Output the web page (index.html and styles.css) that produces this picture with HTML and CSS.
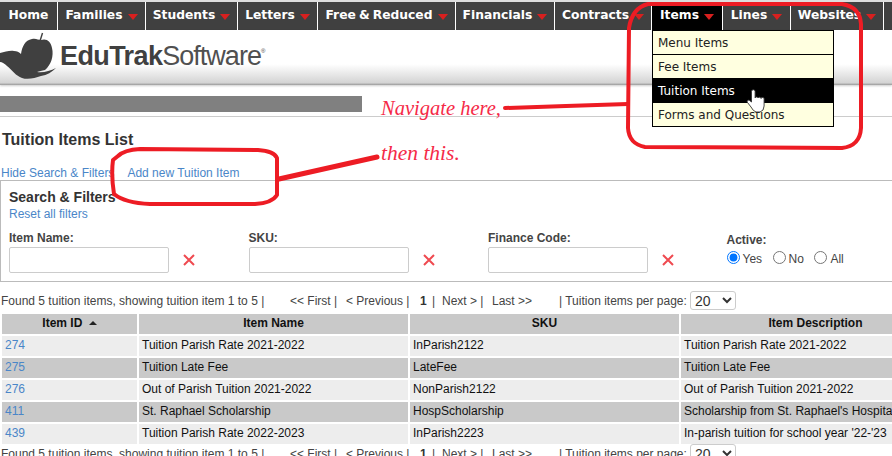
FILE: index.html
```html
<!DOCTYPE html>
<html lang="en">
<head>
<meta charset="utf-8">
<title>Tuition Items List</title>
<link rel="stylesheet" href="styles.css">
</head>
<body>
<nav class="nav">
  <a class="nav-item w-home">Home</a>
  <a class="nav-item w-families">Families<i class="caret"></i></a>
  <a class="nav-item w-students">Students<i class="caret"></i></a>
  <a class="nav-item w-letters">Letters<i class="caret"></i></a>
  <a class="nav-item w-free">Free &amp; Reduced<i class="caret"></i></a>
  <a class="nav-item w-fin">Financials<i class="caret"></i></a>
  <a class="nav-item w-con">Contracts<i class="caret"></i></a>
  <a class="nav-item w-items active">Items<i class="caret"></i></a>
  <a class="nav-item w-lines">Lines<i class="caret"></i></a>
  <a class="nav-item w-web">Websites<i class="caret"></i></a>
</nav>
<header class="brand">
  <svg class="logo" width="58" height="50" viewBox="0 30 58 50">
    <path fill="#404040" d="M0 53 C5 52 10 50 14 51 C17 51 19 52 21 54 C22 47 25 40 32 39 C36 38 38 40 41 40 C46 38 51 41 52 48 C54 56 51 65 45 70 C42 71 39 71 37 72 C43 73 50 71 56 68 C52 72 47 75 41 76 C35 78 28 80 22 78 C16 76 12 70 7 66 C5 64 2 62 0 62 Z"/>
    <path stroke="#404040" stroke-width="1.4" d="M40 41 L42.5 33"/>
  </svg>
  <div class="wordmark"><b>EduTrak</b><span>Software</span><sup>®</sup></div>
</header>
<div class="greybar"></div>
<hr class="rule">
<main class="content">
  <h1 class="title">Tuition Items List</h1>
  <div class="links"><a class="link">Hide Search &amp; Filters</a><a class="link add">Add new Tuition Item</a></div>
  <section class="filters">
    <h2 class="filters-title">Search &amp; Filters</h2>
    <a class="link reset">Reset all filters</a>
    <div class="fields">
      <div class="field"><label class="lbl">Item Name:</label><div class="control"><input class="box" type="text"><svg class="clear" width="12" height="12" viewBox="0 0 12 12"><path d="M1 1 L11 11 M11 1 L1 11"/></svg></div></div>
      <div class="field"><label class="lbl">SKU:</label><div class="control"><input class="box" type="text"><svg class="clear" width="12" height="12" viewBox="0 0 12 12"><path d="M1 1 L11 11 M11 1 L1 11"/></svg></div></div>
      <div class="field"><label class="lbl">Finance Code:</label><div class="control"><input class="box" type="text"><svg class="clear" width="12" height="12" viewBox="0 0 12 12"><path d="M1 1 L11 11 M11 1 L1 11"/></svg></div></div>
      <div class="field active-field"><label class="lbl">Active:</label>
        <div class="radios">
          <input class="radio" type="radio" name="a" checked><span class="r-text">Yes</span>
          <input class="radio" type="radio" name="a"><span class="r-text">No</span>
          <input class="radio" type="radio" name="a"><span class="r-text">All</span>
        </div>
      </div>
    </div>
  </section>
  <div class="pager">
    <span class="p-found">Found 5 tuition items, showing tuition item 1 to 5 |</span>
    <span class="p-first">&lt;&lt; First |</span>
    <span class="p-prev">&lt; Previous |</span>
    <b class="p-num">1</b><span class="p-sep">|</span>
    <span class="p-next">Next &gt; |</span>
    <span class="p-last">Last &gt;&gt;</span>
    <span class="p-per">| Tuition items per page:</span>
    <select class="per"><option>20</option></select>
  </div>
  <table class="grid">
    <thead>
      <tr><th class="c1">Item ID <i class="sort"></i></th><th class="c2">Item Name</th><th class="c3">SKU</th><th class="c4">Item Description</th></tr>
    </thead>
    <tbody>
      <tr><td><a class="link">274</a></td><td>Tuition Parish Rate 2021-2022</td><td>InParish2122</td><td>Tuition Parish Rate 2021-2022</td></tr>
      <tr class="alt"><td><a class="link">275</a></td><td>Tuition Late Fee</td><td>LateFee</td><td>Tuition Late Fee</td></tr>
      <tr><td><a class="link">276</a></td><td>Out of Parish Tuition 2021-2022</td><td>NonParish2122</td><td>Out of Parish Tuition 2021-2022</td></tr>
      <tr class="alt"><td><a class="link">411</a></td><td>St. Raphael Scholarship</td><td>HospScholarship</td><td>Scholarship from St. Raphael's Hospital</td></tr>
      <tr><td><a class="link">439</a></td><td>Tuition Parish Rate 2022-2023</td><td>InParish2223</td><td>In-parish tuition for school year '22-'23</td></tr>
    </tbody>
  </table>
  <div class="pager">
    <span class="p-found">Found 5 tuition items, showing tuition item 1 to 5 |</span>
    <span class="p-first">&lt;&lt; First |</span>
    <span class="p-prev">&lt; Previous |</span>
    <b class="p-num">1</b><span class="p-sep">|</span>
    <span class="p-next">Next &gt; |</span>
    <span class="p-last">Last &gt;&gt;</span>
    <span class="p-per">| Tuition items per page:</span>
    <select class="per"><option>20</option></select>
  </div>
</main>

<ul class="menu">
  <li class="menu-item">Menu Items</li>
  <li class="menu-item">Fee Items</li>
  <li class="menu-item current">Tuition Items</li>
  <li class="menu-item">Forms and Questions</li>
</ul>

<svg class="marks" width="892" height="456" viewBox="0 0 892 456">
  <g fill="none" stroke="#ed1c24" stroke-width="4" stroke-linejoin="round" stroke-linecap="round">
    <path d="M648 4 Q632 8 629 28 L628 128 Q629 144 645 147 L842 148 Q860 146 861 128 L861 24 Q860 7 842 4 Z"/>
    <path d="M505 108 L566 106 L628 104"/>
    <path d="M118 156 Q124 150 140 149 L258 150 Q274 151 277 158 L277 195 Q272 203 255 204 L150 204 Q125 203 114 194 Q111 175 113 160 Z"/>
    <path d="M279 179 L377 157" stroke-width="5"/>
  </g>
  <path d="M751.5 91.5 a1.8 1.8 0 0 1 3.6 0 V98 a1.6 1.6 0 0 1 3 0 a1.6 1.6 0 0 1 3 .5 a1.5 1.5 0 0 1 3 .8 V106 Q764 111 760 112 H756 Q753 111 751 107 L747.5 102.5 a1.5 1.5 0 0 1 2.2 -2 L751.5 102 Z" fill="#fff" stroke="#333" stroke-width=".9"/>
</svg>
<div class="note note-1">Navigate here,</div>
<div class="note note-2">then this.</div>
</body>
</html>
```
FILE: styles.css
```css
* { box-sizing: border-box; }
html, body { margin: 0; padding: 0; width: 892px; height: 456px; overflow: hidden; background: #fff; }
body { font-family: "Liberation Sans", Arial, sans-serif; font-size: 12px; color: #333; position: relative; }

.nav { display: flex; height: 30px; background: #404040; border-top: 2px solid #ddd; width: 960px; }
.nav-item { display: flex; align-items: center; justify-content: center; height: 28px; padding-bottom: 2px; font-family: "DejaVu Sans", Verdana, sans-serif; font-weight: 700; font-size: 12.3px; word-spacing: -1.2px; color: #fff; border-right: 1px solid #fff; flex: none; }
.w-home { width: 58px; }
.w-families { width: 88px; }
.w-students { width: 92px; }
.w-letters { width: 80px; }
.w-free { width: 138px; }
.w-fin { width: 99px; }
.w-con { width: 97px; }
.w-items { width: 71px; }
.w-lines { width: 68px; }
.w-web { width: 93px; }
.nav-item.active { background: #000; }
.caret { display: inline-block; width: 0; height: 0; margin-left: 5px; margin-top: 3px; border-left: 5px solid transparent; border-right: 5px solid transparent; border-top: 6px solid #d8201f; }

.brand { display: flex; align-items: flex-start; height: 55px; background: linear-gradient(#fff 0, #fff 62%, #d4d4d4 96%, #999 100%); box-shadow: 0 1px 2px rgba(0, 0, 0, .2); }
.logo { flex: none; }
.wordmark { margin: 11px 0 0 2px; font-size: 27px; line-height: 30px; color: #404040; letter-spacing: -0.6px; white-space: nowrap; }
.wordmark b { font-weight: 700; }
.wordmark span { font-weight: 400; letter-spacing: -1px; color: #505050; }
.wordmark sup { font-size: 6px; line-height: 0; vertical-align: 12px; }

.greybar { width: 362px; height: 16px; margin-top: 11px; background: #808080; }
.rule { height: 1px; margin: 4px 0 0; border: 0; background: #ccc; }

.title { margin: 14px 0 0 2px; font-size: 16px; line-height: 18px; font-weight: 700; color: #333; }
.links { margin: 17px 0 0 1px; height: 14px; line-height: 14px; }
.link { color: #4a86c8; }
.add { margin-left: 13px; }
.filters { height: 102px; border: 1px solid #bbb; border-right: 0; width: 892px; padding: 9px 0 0 8px; }
.filters-title { margin: 0; font-size: 14px; line-height: 15px; font-weight: 700; color: #333; }
.reset { display: block; line-height: 14px; margin-top: 2px; }
.fields { display: flex; margin-top: 10px; }
.field { width: 239.5px; flex: none; }
.lbl { display: block; font-weight: 700; line-height: 14px; height: 16px; color: #444; }
.control { display: flex; align-items: center; }
.box { width: 160px; height: 26px; border: 1px solid #ccc; border-radius: 2px; background: #fff; margin: 0; }
.clear { margin-left: 14px; flex: none; fill: none; stroke: #ef4a50; stroke-width: 2; }
.active-field { padding-top: 2px; width: 160px; margin-left: -1px; }
.radios { display: flex; align-items: center; height: 18px; margin-top: -1px; }
.radio { margin: 0 3px 0 0; width: 13px; height: 13px; flex: none; }
.r-text { margin-right: 10.5px; color: #444; padding-top: 3px; }

.pager { position: relative; height: 22px; margin-top: 8px; white-space: nowrap; line-height: 22px; color: #444; }
.pager span, .pager b, .pager select { position: absolute; top: 0; }
.pager .p-found { left: 1px; }
.pager .p-first { left: 290px; }
.pager .p-prev { left: 346px; }
.pager .p-num { left: 420px; color: #333; }
.pager .p-sep { left: 432px; }
.pager .p-next { left: 442px; }
.pager .p-last { left: 492px; }
.pager .p-per { left: 559px; }
.pager .per { left: 690px; top: 1px; width: 46px; height: 19px; font: 14px "Liberation Sans", sans-serif; color: #333; background: #fff; border: 1px solid #ccc; border-radius: 3px; padding: 0; }

.grid { table-layout: fixed; width: 952px; border-collapse: separate; border-spacing: 2px; margin-top: 0; color: #111; }
.c1 { width: 135px; } .c2 { width: 269px; } .c3 { width: 269px; } .c4 { width: 269px; }
.grid th { height: 20px; padding: 0 0 2px; background: #c9c9c9; font-weight: 700; text-align: center; }
.grid td { height: 20px; padding: 0 3px 2px; background: #ededed; white-space: nowrap; overflow: hidden; }
.grid .alt td { background: #c9c9c9; }
.sort { display: inline-block; width: 0; height: 0; margin: 0 0 2px 3px; border-left: 4px solid transparent; border-right: 4px solid transparent; border-bottom: 4px solid #222; }
.grid + .pager { margin-top: -3px; }

.menu { position: absolute; left: 652px; top: 30px; width: 182px; margin: 0; padding: 0; list-style: none; border: 1px solid #000; background: #ffffe0; }
.menu-item { height: 24px; line-height: 24px; padding-left: 5px; font-family: "DejaVu Sans", Verdana, sans-serif; font-size: 12px; color: #222; border-bottom: 1px solid #000; }
.menu-item:last-child { border-bottom: 0; height: 23px; }
.menu-item.current { background: #000; color: #fff; border-bottom-color: #000; }

.marks { position: absolute; left: 0; top: 0; pointer-events: none; }
.note { position: absolute; font-family: "Liberation Serif", serif; font-style: italic; color: #f52a48; line-height: 26px; }
.note-1 { left: 381px; top: 95px; font-size: 20.5px; }
.note-2 { left: 381px; top: 140px; font-size: 21.5px; }
```
